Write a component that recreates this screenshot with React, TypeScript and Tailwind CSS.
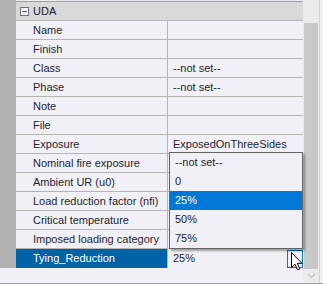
const ROWS: { label: string; value: string }[] = [
  { label: 'Name', value: '' },
  { label: 'Finish', value: '' },
  { label: 'Class', value: '--not set--' },
  { label: 'Phase', value: '--not set--' },
  { label: 'Note', value: '' },
  { label: 'File', value: '' },
  { label: 'Exposure', value: 'ExposedOnThreeSides' },
  { label: 'Nominal fire exposure', value: '' },
  { label: 'Ambient UR (u0)', value: '' },
  { label: 'Load reduction factor (nfi)', value: '' },
  { label: 'Critical temperature', value: '' },
  { label: 'Imposed loading category', value: '' },
]

const OPTIONS = ['--not set--', '0', '25%', '50%', '75%']

export default function App() {
  return (
    <div
      className="relative w-[323px] h-[284px] overflow-hidden bg-[#f0f0f6] text-[11px] text-[#1e1e30]"
      style={{ fontFamily: '"Liberation Sans", Arial, sans-serif' }}
    >
      <div className="flex h-[283px]">
        {/* property grid */}
        <div className="w-[303px] flex flex-col">
          <div className="flex h-[268px]">
            <div className="w-[16px] bg-[#b1b1b1]" />
            <div className="flex-1 flex flex-col">
              <div className="h-[1px] bg-[#ececf0]" />
              <div className="h-[1px] bg-[#a0a0a0]" />
              {/* category header */}
              <div className="h-[19px] bg-[#d9d9d9] border-b border-[#b4b4b4] flex items-center">
                <div className="ml-[4px] w-[9px] h-[9px] border border-[#6e6e8c] bg-[#f4f4f8] flex items-center justify-center">
                  <div className="w-[5px] h-[1px] bg-[#2a5cc0]" />
                </div>
                <span className="ml-[4px]">UDA</span>
              </div>
              {ROWS.map((row) => (
                <div key={row.label} className="h-[19px] flex border-b border-[#b4b4b4]">
                  <div className="w-[152px] pl-[17px] flex items-center border-r border-[#b4b4b4]">
                    {row.label}
                  </div>
                  <div className="flex-1 pl-[5px] flex items-center">{row.value}</div>
                </div>
              ))}
              {/* selected row */}
              <div className="h-[19px] flex">
                <div className="w-[152px] pl-[17px] flex items-center bg-[#0063a8] text-white border-r border-[#b4b4b4]">
                  Tying_Reduction
                </div>
                <div className="flex-1 pl-[5px] flex items-center">
                  <span className="flex-1">25%</span>
                  <div className="w-[16px] h-[18px] border border-[#0078d7] bg-[#f0f0f6]" />
                </div>
              </div>
            </div>
          </div>
          <div className="flex-1 bg-[#f0f0f6]" />
        </div>
        {/* vertical scrollbar */}
        <div className="w-[17px] bg-[#ebebeb] border-r border-[#d4d4d8] flex flex-col">
          <div className="h-[23px]" />
          <div className="mx-[1px] h-[246px] bg-[#c8c8c8]" />
          <div className="flex-1 flex items-center justify-center">
            <svg width="9" height="6" viewBox="0 0 9 6">
              <path d="M1 1 L4.5 4.5 L8 1" fill="none" stroke="#bdbdbd" strokeWidth="1.2" />
            </svg>
          </div>
        </div>
      </div>
      <div className="h-[1px] bg-[#a0a0a0]" />

      {/* dropdown list */}
      <div className="absolute left-[169px] top-[152px] w-[134px] border border-[#646464] bg-[#f0f0f6] shadow-[2px_2px_2px_rgba(0,0,0,0.35)]">
        {OPTIONS.map((opt) => (
          <div
            key={opt}
            className={`h-[19px] pl-[5px] flex items-center ${opt === '25%' ? 'bg-[#0078d7] text-white' : ''}`}
          >
            {opt}
          </div>
        ))}
      </div>

      {/* mouse cursor */}
      <svg className="absolute left-[291px] top-[252px]" width="13" height="19" viewBox="0 0 13 19">
        <path
          d="M0.5 0.5 L0.5 15.5 L4 12.2 L6.5 17.8 L8.7 16.8 L6.3 11.3 L11 11.3 Z"
          fill="#ffffff"
          stroke="#000000"
          strokeWidth="1"
          strokeLinejoin="miter"
        />
      </svg>
    </div>
  )
}
